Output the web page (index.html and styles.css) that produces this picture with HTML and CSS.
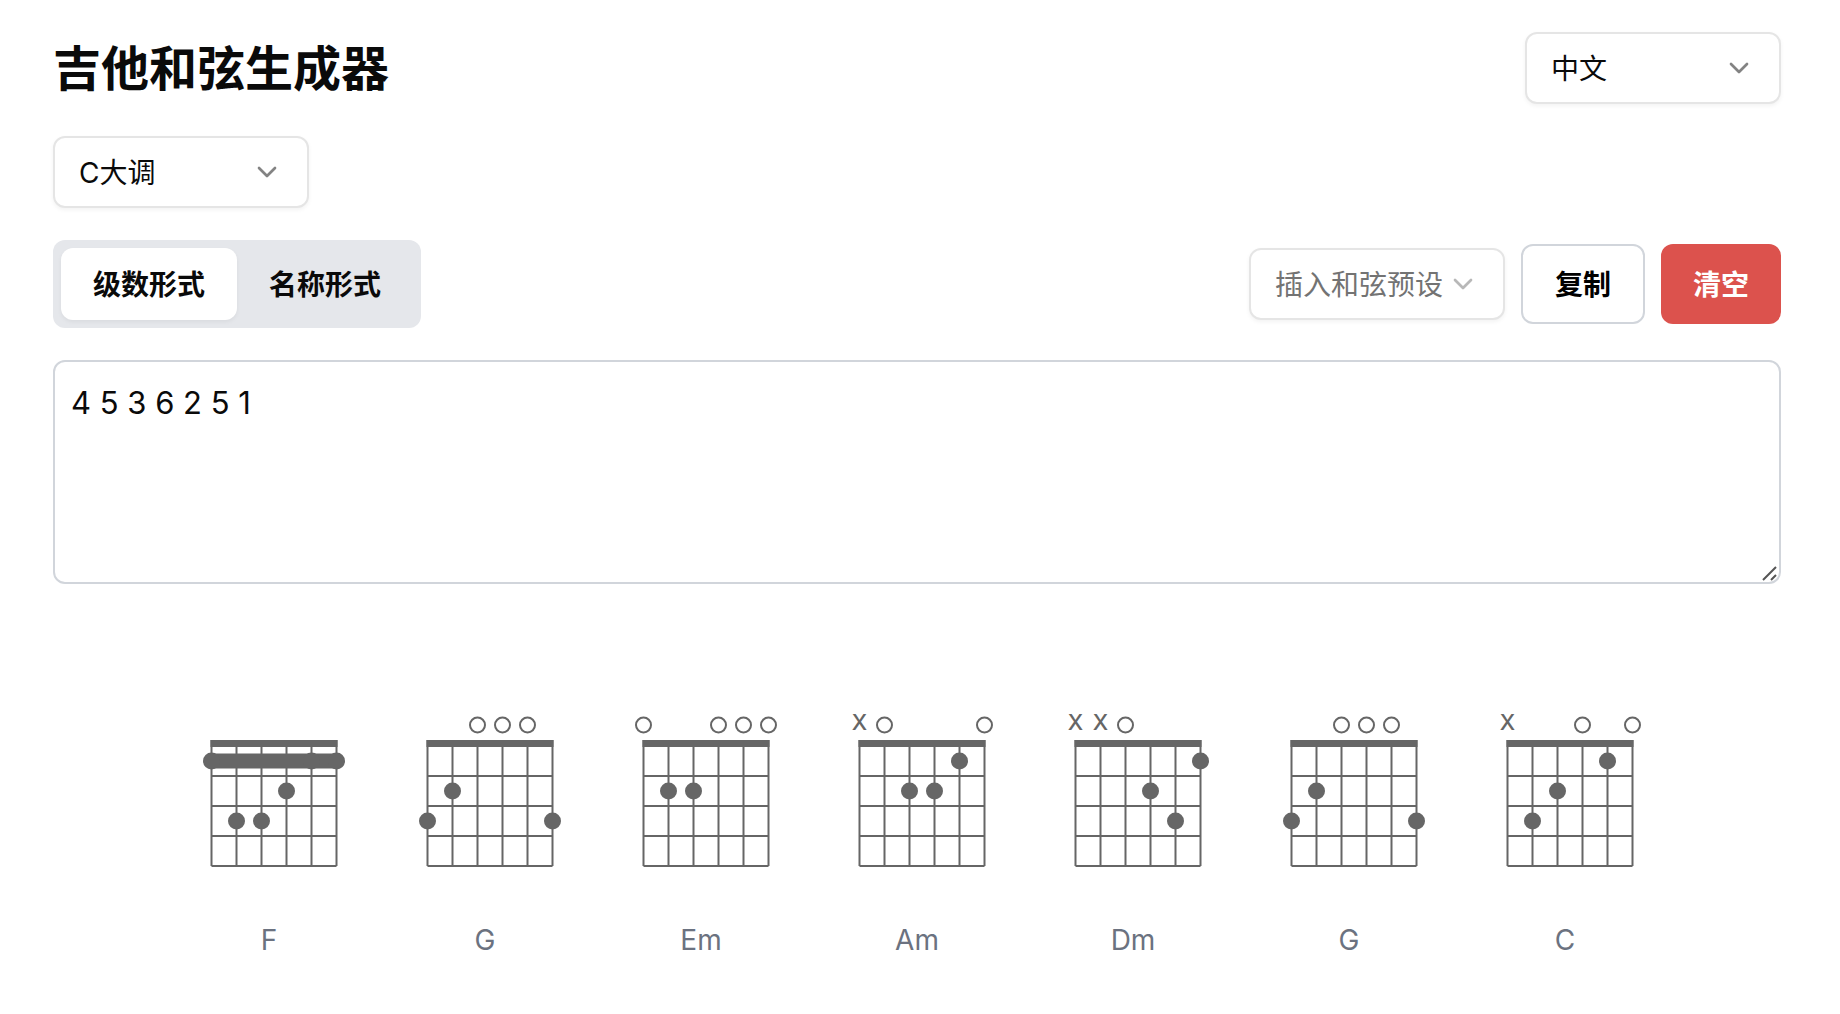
FILE: index.html
```html
<!DOCTYPE html>
<html lang="zh-CN">
<head>
<meta charset="utf-8">
<meta name="viewport" content="width=device-width, initial-scale=1">
<title>吉他和弦生成器</title>
<link rel="stylesheet" href="styles.css">
</head>
<body>
<main class="page">
  <header class="bar">
    <h1 class="title">吉他和弦生成器</h1>
    <div class="select">
      <select class="select-input" aria-label="语言"><option>中文</option></select>
      <svg class="chevron" viewBox="0 0 24 24" aria-hidden="true"><path d="m6 9 6 6 6-6"/></svg>
    </div>
  </header>

  <div class="select">
    <select class="select-input" aria-label="调式"><option>C大调</option></select>
    <svg class="chevron" viewBox="0 0 24 24" aria-hidden="true"><path d="m6 9 6 6 6-6"/></svg>
  </div>

  <div class="bar">
    <div class="tabs" role="tablist">
      <button class="tab tab-active" type="button" role="tab" aria-selected="true">级数形式</button>
      <button class="tab" type="button" role="tab" aria-selected="false">名称形式</button>
    </div>
    <div class="actions">
      <div class="select select-placeholder">
        <select class="select-input" aria-label="和弦预设"><option>插入和弦预设</option></select>
        <svg class="chevron" viewBox="0 0 24 24" aria-hidden="true"><path d="m6 9 6 6 6-6"/></svg>
      </div>
      <button class="button button-outline" type="button">复制</button>
      <button class="button button-danger" type="button">清空</button>
    </div>
  </div>

  <div class="editor-box">
    <textarea class="editor" aria-label="和弦进行" spellcheck="false">4 5 3 6 2 5 1</textarea>
    <svg class="grip" viewBox="0 0 16 16" aria-hidden="true"><path d="M2 15 15 2M10 15l5-5"/></svg>
  </div>

  <section class="chords" id="chords" aria-label="和弦图"></section>
</main>
<script src="chords.js"></script>
</body>
</html>
```
FILE: styles.css
```css
*,
*::before,
*::after {
  box-sizing: border-box;
}

body {
  margin: 0;
  background: #fff;
  color: #0a0a0a;
  font-family: Inter, "Noto Sans CJK SC", sans-serif;
  font-size: 28px;
  line-height: 40px;
}

button,
select,
textarea {
  font: inherit;
  color: inherit;
}

.page {
  display: flex;
  flex-direction: column;
  align-items: stretch;
  gap: 32px;
  padding: 32px 59px 32px 53px;
}

.bar {
  display: flex;
  align-items: center;
  justify-content: space-between;
}

.title {
  margin: 0;
  padding-top: 2px;
  font-size: 48px;
  line-height: 64px;
  font-weight: 700;
}

.select {
  position: relative;
  width: 256px;
}

.select-input {
  display: block;
  width: 100%;
  height: 72px;
  padding: 2px 56px 0 24px;
  border: 2px solid #e5e5e5;
  border-radius: 12px;
  background: #fff;
  box-shadow: 0 2px 4px rgba(0, 0, 0, 0.05);
  appearance: none;
}

.select-placeholder {
  color: #737373;
}

.chevron {
  position: absolute;
  top: 20px;
  right: 26px;
  width: 32px;
  height: 32px;
  fill: none;
  stroke: currentColor;
  stroke-width: 2;
  stroke-linecap: round;
  stroke-linejoin: round;
  opacity: 0.5;
  pointer-events: none;
}

.select-placeholder .select-input {
  padding-right: 24px;
}

.tabs {
  display: flex;
  padding: 8px;
  border-radius: 12px;
  background: #e5e7eb;
}

.tab {
  height: 72px;
  padding: 2px 32px 0;
  border: 0;
  border-radius: 12px;
  background: transparent;
  font-weight: 700;
}

.tab-active {
  background: #fff;
  box-shadow: 0 2px 4px rgba(0, 0, 0, 0.05);
}

.actions {
  display: flex;
  align-items: center;
  gap: 16px;
}

.button {
  height: 80px;
  padding: 2px 32px 0;
  border: 0;
  border-radius: 12px;
  font-weight: 700;
}

.button-outline {
  border: 2px solid #d1d5db;
  background: #fff;
  color: #000;
}

.button-danger {
  background: #dc524d;
  color: #fff;
}

.editor-box {
  position: relative;
}

.editor {
  display: block;
  width: 100%;
  height: 224px;
  padding: 17px 16px 16px;
  border: 2px solid #d1d5db;
  border-radius: 12px;
  background: #fff;
  font-size: 31px;
  line-height: 48px;
  resize: vertical;
}

.editor::-webkit-resizer {
  background: transparent;
}

.grip {
  position: absolute;
  right: 4px;
  bottom: 3px;
  width: 16px;
  height: 16px;
  fill: none;
  stroke: #555;
  stroke-width: 2;
  pointer-events: none;
}

.chords {
  display: flex;
  flex-wrap: wrap;
  justify-content: center;
  gap: 16px;
  padding-top: 64px;
}

.chord {
  display: flex;
  flex-direction: column;
  align-items: center;
  gap: 40px;
  width: 200px;
  margin: 0;
  color: #6b7280;
}

.diagram {
  display: block;
  width: 200px;
  height: 200px;
  fill: #666;
  stroke: none;
}

.wire {
  fill: none;
  stroke: #666;
  stroke-width: 2;
}

.open {
  fill: #fff;
  stroke: #666;
  stroke-width: 2;
}

.muted {
  font-size: 22px;
  font-weight: 500;
  text-anchor: middle;
}
```
FILE: chords.js
```js
// Frets run from the low E string to the high E string; "x" is muted, 0 is open.
const chords = [
  { name: "F", frets: [1, 3, 3, 2, 1, 1], barre: 1 },
  { name: "G", frets: [3, 2, 0, 0, 0, 3] },
  { name: "Em", frets: [0, 2, 2, 0, 0, 0] },
  { name: "Am", frets: ["x", 0, 2, 2, 1, 0] },
  { name: "Dm", frets: ["x", "x", 0, 2, 3, 1] },
  { name: "G", frets: [3, 2, 0, 0, 0, 3] },
  { name: "C", frets: ["x", 3, 2, 0, 1, 0] }
];

// The six strings are centred in the drawing, a little right of the middle.
const LEFT = 42.5;
const TOP = 66;
const STRING_GAP = 25;
const FRET_GAP = 30;

function drawChord(chord) {
  const right = LEFT + STRING_GAP * 5;
  const bottom = TOP + FRET_GAP * 4;
  let wires = "";
  for (let s = 0; s < 6; s++) {
    wires += `M${LEFT + s * STRING_GAP} ${TOP - 6}V${bottom}`;
  }
  for (let f = 0; f < 5; f++) {
    wires += `M${LEFT} ${TOP + f * FRET_GAP}H${right}`;
  }
  let marks = `<rect x="${LEFT - 1}" y="${TOP - 6}" width="${right - LEFT + 2}" height="7"/>`;
  if (chord.barre) {
    const y = TOP + FRET_GAP * (chord.barre - 0.5);
    marks += `<rect x="${LEFT}" y="${y - 7.5}" width="${right - LEFT}" height="15"/>`;
  }
  chord.frets.forEach((fret, s) => {
    const x = LEFT + s * STRING_GAP;
    if (fret === "x") {
      marks += `<text class="muted" x="${x}" y="50">X</text>`;
    } else if (fret === 0) {
      marks += `<circle class="open" cx="${x}" cy="45" r="7.5"/>`;
    } else {
      marks += `<circle cx="${x}" cy="${TOP + FRET_GAP * (fret - 0.5)}" r="8.5"/>`;
    }
  });
  return `<figure class="chord">
    <svg class="diagram" viewBox="0 0 200 200" aria-hidden="true"><path class="wire" d="${wires}"/>${marks}</svg>
    <figcaption>${chord.name}</figcaption>
  </figure>`;
}

document.getElementById("chords").innerHTML = chords.map(drawChord).join("");
```
